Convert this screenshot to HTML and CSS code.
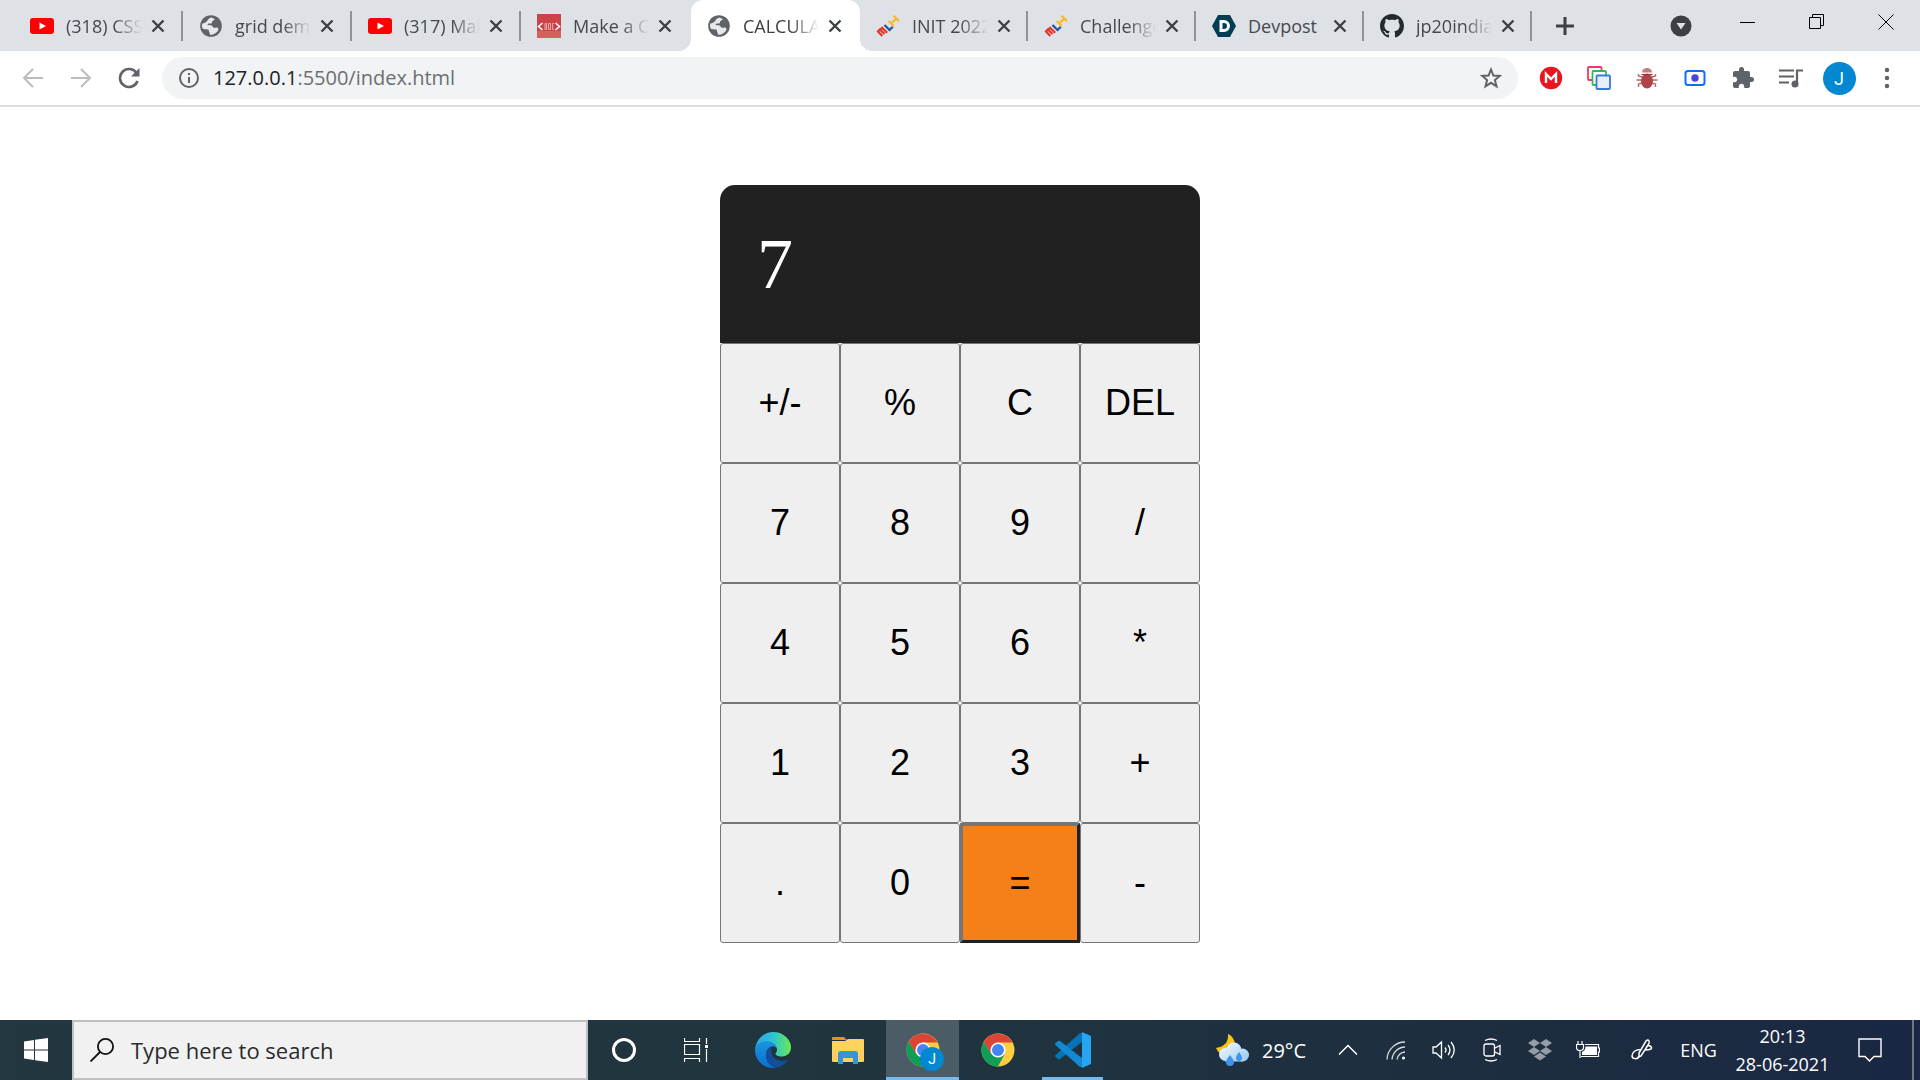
FILE: index.html
```
<!DOCTYPE html>
<html lang="en">
<head>
    <meta charset="UTF-8">
    <meta name="viewport" content="width=device-width, initial-scale=1.0">
    <title>CALCULATOR</title>
    <link rel="stylesheet" href="styles.css">
</head>
<body>
    <!-- shared icons -->
    <svg class="defs" width="0" height="0">
        <symbol id="x" viewBox="0 0 14 14"><path d="M1.5 1.5 12.5 12.5M12.5 1.5 1.5 12.5" stroke="#3c4043" stroke-width="2.4"/></symbol>
        <symbol id="youtube" viewBox="0 0 24 24"><rect y="4" width="24" height="16" rx="3" fill="#f00"/><path d="M9.5 8.500 16 12l-6.500 3.500z" fill="#fff"/></symbol>
        <symbol id="globe" viewBox="0 0 24 24"><circle cx="12" cy="12" r="10.800" fill="#5f6368"/><path d="M12.500 3.500C8 5 9 7 6.500 8.500L3.200 9.800c-.5 2-.2 3.500.8 5.200l5 .5c1.500.5.5 2 1.500 3l.5 2.300c4 .2 7-2 8.500-5l-.5-1.800c-1.500-1.500-3 .5-4.500-.5-1.500-1.200-1-2.500-3.500-2.300L8.500 11c0-2 2-1.500 3.500-1.500 1.500-.2.500-1.500 1.500-2.500 1-.8 2.500-.5 2-2z" fill="#e6e8eb"/></symbol>
        <symbol id="mlh" viewBox="0 0 24 24"><g fill="none" stroke-width="2.200"><path d="M1.300 16.800l5 5.200M1.900 17.400l2-1.900 4.700 4.500M4.200 15.800l2-2 4.900 4.900" stroke="#e73427"/><path d="M8.500 11l5 5 3.300-3.200" stroke="#1d539f"/><path d="M12.500 7l5.200 5M17.500 1.800l5.500 5.400M15 9.600l5.300-5.200" stroke="#f8b92a"/></g></symbol>
        <symbol id="chrome" viewBox="0 0 34 34"><circle cx="17" cy="17" r="16.500" fill="#ffcd40"/><path d="M2.700 8.700A16.500 16.500 0 0 1 31.500 9.500H17l-7 12z" fill="#db4437"/><path d="M2.700 8.700A16.500 16.500 0 0 0 17 33.500l6.500-12L17 17l-7 4z" fill="#0f9d58"/><circle cx="17" cy="17" r="7.600" fill="#fff"/><circle cx="17" cy="17" r="6" fill="#4285f4"/></symbol>
    </svg>

    <!-- tab strip -->
    <div class="tab-strip">
        <div class="tab"><svg class="favicon"><use href="#youtube"/></svg><span class="title">(318) CSS Grid</span><button class="close" aria-label="Close tab"><svg width="14" height="14"><use href="#x"/></svg></button></div>
        <div class="tab"><svg class="favicon"><use href="#globe"/></svg><span class="title">grid demo</span><button class="close" aria-label="Close tab"><svg width="14" height="14"><use href="#x"/></svg></button></div>
        <div class="tab"><svg class="favicon"><use href="#youtube"/></svg><span class="title">(317) Make</span><button class="close" aria-label="Close tab"><svg width="14" height="14"><use href="#x"/></svg></button></div>
        <div class="tab last-before"><svg class="favicon" viewBox="0 0 24 24"><rect width="24" height="24" fill="#cb444a"/><rect y="17" width="24" height="7" fill="#d5605c"/><path d="M5.500 9 1.500 12.500l4 3.500M18.500 9l4 3.500-4 3.500" fill="none" stroke="#fff" stroke-width="1.600"/><path d="M8 9.500h1.500v6H8zM11.500 9.500h2v6h-2zM17 9.500h-1.500v6H17" fill="none" stroke="#eba5a6"/></svg><span class="title">Make a Calculator</span><button class="close" aria-label="Close tab"><svg width="14" height="14"><use href="#x"/></svg></button></div>
        <div class="tab active"><svg class="favicon"><use href="#globe"/></svg><span class="title">CALCULATOR</span><button class="close" aria-label="Close tab"><svg width="14" height="14"><use href="#x"/></svg></button></div>
        <div class="tab"><svg class="favicon"><use href="#mlh"/></svg><span class="title">INIT 2022</span><button class="close" aria-label="Close tab"><svg width="14" height="14"><use href="#x"/></svg></button></div>
        <div class="tab"><svg class="favicon"><use href="#mlh"/></svg><span class="title">Challenges</span><button class="close" aria-label="Close tab"><svg width="14" height="14"><use href="#x"/></svg></button></div>
        <div class="tab"><svg class="favicon" viewBox="0 0 24 24"><path d="M6 1h12l6 11-6 11H6L0 12z" fill="#003e54"/><path d="M9 7.500h3a4.500 4.500 0 0 1 0 9H9z" fill="none" stroke="#fff" stroke-width="3"/></svg><span class="title short">Devpost</span><button class="close" aria-label="Close tab"><svg width="14" height="14"><use href="#x"/></svg></button></div>
        <div class="tab"><svg class="favicon" viewBox="0 0 16 16"><path fill="#24292e" d="M8 0C3.580 0 0 3.580 0 8c0 3.540 2.290 6.530 5.470 7.590.4.070.55-.17.55-.38 0-.19-.01-.82-.01-1.490-2.010.37-2.530-.49-2.690-.94-.09-.23-.48-.94-.82-1.130-.28-.15-.68-.52-.01-.53.63-.01 1.080.58 1.230.82.72 1.210 1.870.87 2.330.66.070-.52.28-.87.51-1.070-1.780-.2-3.640-.89-3.640-3.950 0-.87.31-1.590.82-2.150-.08-.2-.36-1.020.08-2.120 0 0 .67-.21 2.200.82.64-.18 1.320-.27 2-.27s1.360.09 2 .27c1.530-1.040 2.200-.82 2.200-.82.44 1.100.16 1.920.08 2.120.51.56.82 1.270.82 2.150 0 3.070-1.870 3.750-3.650 3.950.29.25.54.73.54 1.480 0 1.070-.01 1.930-.01 2.200 0 .21.15.46.55.38A8.010 8.010 0 0 0 16 8c0-4.420-3.580-8-8-8z"/></svg><span class="title">jp20india (Jp)</span><button class="close" aria-label="Close tab"><svg width="14" height="14"><use href="#x"/></svg></button></div>
        <button class="new-tab" aria-label="New tab"><svg width="18" height="18"><path d="M9 0v18M0 9h18" stroke="#3c4043" stroke-width="3"/></svg></button>
        <button class="tab-search" aria-label="Search tabs"><svg width="22" height="22"><circle cx="11" cy="11" r="10.500" fill="#3c4043"/><path d="M6.500 8h9L11 14.500z" fill="#dee1e6"/></svg></button>
        <button class="window-button" aria-label="Minimize"><svg width="16" height="16"><path d="M0 8.500h15" stroke="#000"/></svg></button>
        <button class="window-button" aria-label="Restore"><svg width="16" height="16" fill="none" stroke="#000"><path d="M.5 3.500h11v11H.500zM3.500 3V.500h11v11H12"/></svg></button>
        <button class="window-button" aria-label="Close"><svg width="16" height="16"><path d="M.5.500l15 15M15.500.500l-15 15" stroke="#000"/></svg></button>
    </div>

    <!-- toolbar -->
    <div class="toolbar">
        <button class="tool" aria-label="Back"><svg width="22" height="22" fill="none" stroke="#babcbe" stroke-width="2"><path d="M21 11H2M11 2l-9 9 9 9"/></svg></button>
        <button class="tool" aria-label="Forward"><svg width="22" height="22" fill="none" stroke="#babcbe" stroke-width="2"><path d="M1 11h19M11 2l9 9-9 9"/></svg></button>
        <button class="tool" aria-label="Reload"><svg width="22" height="22"><path d="M18.500 6A9 9 0 1 0 19.500 14" fill="none" stroke="#5f6368" stroke-width="2.600"/><path d="M21.500 1v8.500H13z" fill="#5f6368"/></svg></button>
        <div class="omnibox">
            <svg width="22" height="22"><circle cx="11" cy="11" r="9" fill="none" stroke="#5f6368" stroke-width="2"/><path d="M11 6v2M11 10v6" stroke="#5f6368" stroke-width="2"/></svg>
            <span class="url"><b>127.0.0.1</b>:5500/index.html</span>
            <button class="star" aria-label="Bookmark this tab"><svg width="22" height="22"><path d="M11 2.500l2.400 6 6.400.4-4.900 4.100 1.600 6.300-5.500-3.500-5.500 3.500 1.600-6.300-4.900-4.100 6.400-.4z" fill="none" stroke="#5f6368" stroke-width="2"/></svg></button>
        </div>
        <button class="tool" aria-label="Mega"><svg width="24" height="24"><circle cx="12" cy="12" r="11.200" fill="#e9141d"/><path d="M7 17V8l5 5 5-5v9" fill="none" stroke="#fff" stroke-width="2.400"/></svg></button>
        <button class="tool" aria-label="Tab copy"><svg width="24" height="24"><rect x="1" y="1" width="13.500" height="13" rx="1" fill="#fff" stroke="#ee3a60" stroke-width="1.800"/><rect x="5.500" y="5" width="13.500" height="14" rx="1" fill="#fff" stroke="#2bbd55" stroke-width="1.800"/><rect x="9.500" y="9.500" width="13.500" height="13.500" rx="1" fill="#e7f1fd" stroke="#3b78d8" stroke-width="1.800"/></svg></button>
        <button class="tool" aria-label="Bug extension"><svg width="22" height="22"><path d="M6 10 2.500 9V7M6 13H.500M6.500 16l-4 1v3M16 10l3.500-1V7M16 13h5.500M15.500 16l4 1v3" fill="none" stroke="#b56a6c" stroke-width="1.400"/><path d="M6 5.500a5 4.500 0 0 1 10 0z" fill="#c97b7b"/><ellipse cx="11" cy="14" rx="6" ry="7.500" fill="#b04347"/><path d="M5.500 7.500h11" stroke="#96383b"/></svg></button>
        <button class="tool" aria-label="Capture"><svg width="22" height="22"><rect x="1.500" y="4" width="19" height="14" rx="2.500" fill="#fff" stroke="#0b6efd" stroke-width="2"/><circle cx="11" cy="11" r="3.700" fill="#4a47d5"/></svg></button>
        <button class="tool" aria-label="Extensions"><svg width="24" height="24" viewBox="0 0 24 24"><path fill="#5f6368" d="M20.500 11H19V7c0-1.100-.9-2-2-2h-4V3.500a2.500 2.500 0 0 0-5 0V5H4c-1.100 0-2 .9-2 2v3.800h1.500c1.500 0 2.700 1.200 2.700 2.700S5 16.200 3.500 16.200H2V20c0 1.100.9 2 2 2h3.800v-1.500c0-1.500 1.200-2.700 2.700-2.700s2.700 1.200 2.700 2.700V22H17c1.100 0 2-.9 2-2v-4h1.500a2.500 2.500 0 0 0 0-5z"/></svg></button>
        <button class="tool" aria-label="Media control"><svg width="24" height="22"><path d="M0 3.500h15M0 9.500h15M0 15.500h10M18 17V3.500h6" fill="none" stroke="#5f6368" stroke-width="2.200"/><circle cx="16" cy="17" r="3.500" fill="#5f6368"/></svg></button>
        <button class="tool" aria-label="Profile"><span class="avatar">J</span></button>
        <button class="tool" aria-label="Menu"><svg width="6" height="22" fill="#5f6368"><circle cx="3" cy="3" r="2.200"/><circle cx="3" cy="11" r="2.200"/><circle cx="3" cy="19" r="2.200"/></svg></button>
    </div>

    <!-- calculator -->
    <main>
        <div class="calculator">
            <input type="text" id="display" class="display" aria-label="Display" value="7" readonly>
            <div class="keys">
                <button>+/-</button>
                <button>%</button>
                <button>C</button>
                <button>DEL</button>
                <button>7</button>
                <button>8</button>
                <button>9</button>
                <button>/</button>
                <button>4</button>
                <button>5</button>
                <button>6</button>
                <button>*</button>
                <button>1</button>
                <button>2</button>
                <button>3</button>
                <button>+</button>
                <button>.</button>
                <button>0</button>
                <button class="equal">=</button>
                <button>-</button>
            </div>
        </div>
    </main>

    <!-- taskbar -->
    <footer class="taskbar">
        <button class="system" aria-label="Start"><svg width="24" height="24" fill="#fff"><path d="M0 3.500 10 2v9.500H0zM11 1.800 24 0v11.500H11zM0 12.500h10V22L0 20.500zM11 12.500h13V24l-13-1.800z"/></svg></button>
        <label class="search">
            <svg width="24" height="24" fill="none" stroke="#111" stroke-width="1.800"><circle cx="15.500" cy="8.500" r="7.600"/><path d="M10 14 .5 23.500"/></svg>
            <input type="text" aria-label="Search" placeholder="Type here to search">
        </label>
        <button class="system" aria-label="Cortana"><svg width="26" height="26"><circle cx="13" cy="13" r="10.500" fill="none" stroke="#fff" stroke-width="3"/></svg></button>
        <button class="system" aria-label="Task view"><svg width="24" height="24" fill="none" stroke="#fff" stroke-width="1.200"><path d="M.5 0v3.500h15V0M.5 6.500h15v10H.500zM.5 24v-3.500h15V24M22.500 0v6M22.500 11v13"/><path d="M21 7h3v3h-3z" fill="#fff" stroke="none"/></svg></button>
        <div class="apps">
            <button class="app" aria-label="Edge"><svg width="36" height="36" viewBox="0 0 36 36">
                <defs>
                    <linearGradient id="edge-top" x1="0" x2="1"><stop offset="0" stop-color="#2ca7ea"/><stop offset=".5" stop-color="#2dc3d4"/><stop offset="1" stop-color="#6bea4d"/></linearGradient>
                    <linearGradient id="edge-side" x2="0" y2="1"><stop offset="0" stop-color="#1c96dc"/><stop offset="1" stop-color="#0a6ed4"/></linearGradient>
                </defs>
                <path d="M0 18C1 7 9 0 18 0c11 0 18 8 18 15 0 6-4 9.500-9 9.500-4 0-6.500-1.500-6.500-2.500s1.500-1.500 1.500-4.500c0-4-5-7.500-10.500-7.500C6 10 1 14 0 18z" fill="url(#edge-top)"/>
                <path d="M0 18c.5-5 5-9 11-9 6.500 0 11 4 11 8-1-2-3-3-5-2.500C12.500 15.500 11 20 11 23c0 6 4 11 10 13h-3C8 36 0 28 0 18z" fill="url(#edge-side)"/>
                <path d="M17 14.500C12.500 15.500 10.500 20 11 24c.5 6 5 11.500 10 11.700 5-.7 9.500-4 12.500-8.500-3 1.600-7 2-10 1-5.500-1.700-9-6.200-6.500-13.700z" fill="#124e9c"/>
            </svg></button>
            <button class="app" aria-label="File Explorer"><svg width="32" height="28"><path d="M0 2q0-1 1-1h11l3 3H0z" fill="#de9a05"/><path d="M0 5h13l3-2h15q1 0 1 1v21q0 1-1 1H1q-1 0-1-1z" fill="#ffd25f"/><path d="M6 28V18q0-3 3-3h14q3 0 3 3v10h-5v-6H11v6z" fill="#3693dc"/></svg></button>
            <button class="app current" aria-label="Chrome, profile J"><svg width="34" height="34"><use href="#chrome"/></svg><span class="badge">J</span></button>
            <button class="app" aria-label="Chrome"><svg width="34" height="34"><use href="#chrome"/></svg></button>
            <button class="app running" aria-label="Visual Studio Code"><svg width="36" height="36"><path d="M27 10 5 27q-1 .5-2 0l-2.500-2q-1-1 0-2L25 1l2 0z" fill="#0573b8"/><path d="M27 26 5 9q-1-.5-2 0L.5 11q-1 1 0 2L25 35l2 0z" fill="#1289d3"/><path d="M27 0l9 4v28l-9 4z" fill="#26a5f0"/></svg></button>
        </div>
        <div class="tray">
            <button class="weather"><svg width="34" height="32">
                <defs><linearGradient id="cloud" gradientUnits="userSpaceOnUse" x1="8" y1="8" x2="24" y2="30"><stop offset="0" stop-color="#f2f9ff"/><stop offset="1" stop-color="#9fcdf5"/></linearGradient></defs>
                <path d="M12 0Q13 12 0 14q3 7 10 7 10-2 9-12-2-7-7-9z" fill="#fcc419"/>
                <g fill="url(#cloud)"><circle cx="9.500" cy="20.500" r="6.500"/><circle cx="18" cy="16" r="7.500"/><circle cx="26.500" cy="21" r="6.500"/><path d="M9 18h18v9.500H9z"/></g>
                <path d="M14 21q4 5 4 7a4 4 0 0 1-8 0q0-2 4-7zM23 18q3 4 3 6a3 3 0 0 1-6 0q0-2 3-6z" fill="#3d94ea"/>
            </svg>29°C</button>
            <button class="tray-icon" aria-label="Show hidden icons"><svg width="20" height="12" fill="none" stroke="#fff" stroke-width="1.500"><path d="M1 10.500l9-9 9 9"/></svg></button>
            <button class="tray-icon" aria-label="Wi-Fi"><svg width="20" height="20" fill="none" stroke="#d5dade" stroke-width="1.300"><path d="M1 19.500A18 18 0 0 1 19 2M6 19.500A13.500 13.500 0 0 1 19 7M11 19.500A8.500 8.500 0 0 1 19 12"/><circle cx="17.500" cy="18" r="1.500" fill="#fff" stroke="none"/></svg></button>
            <button class="tray-icon" aria-label="Volume"><svg width="24" height="20" fill="none" stroke="#fff" stroke-width="1.300"><path d="M1 7v6h3l5.500 5V2L4 7zM13 7.500q2 2.500 0 5M16 5q4 5 0 10M19 2q6.500 8 0 16"/></svg></button>
            <button class="tray-icon" aria-label="Meet now"><svg width="18" height="24" fill="none" stroke="#fff" stroke-width="1.300"><rect x="1" y="6" width="10.500" height="12" rx="2"/><path d="M12 10l5-2.500v9L12 14M2 2.500q6-3 12 0M2 21.500q6 3 12 0"/></svg></button>
            <button class="tray-icon" aria-label="Dropbox"><svg width="24" height="22" fill="#959ca5"><path d="M6 0l6 4-6 4-6-4zM18 0l6 4-6 4-6-4zM6 8l6 4-6 4-6-4zM18 8l6 4-6 4-6-4zM12 13.500l6 4-6 4-6-4z"/></svg></button>
            <button class="tray-icon" aria-label="Battery"><svg width="24" height="18" fill="none" stroke="#fff" stroke-width="1.200"><path d="M9 3.500h13.500v3.500H23.500v4H22.500v4.500H5M2 0v3.500M6 0v3.500M.5 3.500h7v3q0 3-3.500 3T.5 6.500zM4 10v7"/><path d="M9.500 5.500h11.500V14H6v-3Q9.500 9.500 9.500 5.500z" fill="#fff" stroke="none"/></svg></button>
            <button class="tray-icon wide" aria-label="Ink workspace"><svg width="22" height="22" fill="none" stroke="#fff" stroke-width="1.500"><path d="M8 18V14L15 2q2-2 3 0t-1 4L10 17zM10 11C4 10 1 14 1 17s6 4 7 0M15 9l2-3q5 2 3 4-2 1-6 1"/></svg></button>
            <button class="language">ENG</button>
            <button class="clock">20:13<br>28-06-2021</button>
            <button class="tray-icon wide" aria-label="Notifications"><svg width="24" height="24" fill="none" stroke="#fff" stroke-width="1.400"><path d="M1 1h22v17.500h-7L11.500 23 7 18.500H1z"/></svg></button>
            <button class="show-desktop" aria-label="Show desktop"></button>
        </div>
    </footer>
</body>
</html>
```
FILE: styles.css
```
* { box-sizing: border-box; }
body { margin: 0; min-height: 100vh; display: flex; flex-direction: column; background-color: #fff; font-family: "Open Sans", "Noto Sans", sans-serif; }
button { margin: 0; padding: 0; border: none; background: none; color: inherit; font-family: inherit; }
svg { display: block; flex: none; }
.defs { position: absolute; }

/* tab strip */
.tab-strip { display: flex; align-items: center; height: 51px; padding-left: 14px; background-color: #dee1e6; }
.tab { display: flex; align-items: center; width: 169px; height: 30px; padding: 0 16px; border-right: 2px solid #8f9296; font-size: 18px; color: #45494d; }
.tab.last-before { width: 170px; border-right-color: transparent; }
.tab.active { position: relative; align-self: stretch; height: auto; border: none; border-radius: 12px 12px 0 0; background-color: #fff; color: #3c4043; }
.tab.active::before, .tab.active::after { content: ""; position: absolute; bottom: 0; width: 12px; height: 12px; }
.tab.active::before { right: 100%; background: radial-gradient(circle at 0 0, transparent 12px, #fff 12px); }
.tab.active::after { left: 100%; background: radial-gradient(circle at 100% 0, transparent 12px, #fff 12px); }
.tab.active ~ .tab { width: 168px; }
.favicon { width: 24px; height: 24px; margin-right: 12px; }
.title { flex: none; width: 76px; overflow: hidden; white-space: nowrap; line-height: 24px; -webkit-mask-image: linear-gradient(to right, #000 48px, transparent 76px); mask-image: linear-gradient(to right, #000 48px, transparent 76px); }
.title.short { -webkit-mask-image: none; mask-image: none; }
.close { margin-left: 9px; }
.new-tab { margin-left: 24px; }
.tab-search { display: flex; justify-content: center; width: 64px; margin-left: auto; }
.window-button { display: flex; justify-content: center; width: 69px; padding-bottom: 8px; }

/* toolbar */
.toolbar { display: flex; align-items: center; height: 56px; padding: 0 9px; border-bottom: 2px solid #dadce0; }
.tool { display: flex; align-items: center; justify-content: center; width: 48px; height: 42px; }
.omnibox { flex: 1; display: flex; align-items: center; height: 42px; margin: 0 9px; padding: 0 16px; border-radius: 21px; background-color: #f1f3f4; }
.url { flex: 1; margin-left: 13px; font-size: 20px; line-height: 28px; color: #6b6f73; }
.url b { font-weight: normal; color: #202124; }
.avatar { width: 33px; height: 33px; border-radius: 50%; background-color: #0288d1; color: #fff; font-family: Roboto, sans-serif; font-size: 18px; line-height: 33px; text-align: center; }

/* calculator */
main { flex: 1; padding: 78px 0 60px; }
.calculator { width: 480px; margin: 0 auto; }
.display { display: block; width: 100%; height: 158px; padding: 0 37px; border: none; border-radius: 15px 15px 0 0; outline: none; background-color: #212121; color: #fff; font-family: "Liberation Serif", serif; font-size: 72px; }
.keys { display: grid; grid-template-columns: repeat(4, 1fr); }
.keys button { height: 120px; border: 1px solid #767676; border-radius: 3px; background-color: #efefef; color: #000; font-family: "Liberation Sans", sans-serif; font-size: 36px; }
.keys .equal { border: 3px solid; border-color: #767676 #212121 #212121 #767676; border-radius: 0; background-color: #f58018; }

/* taskbar */
.taskbar { display: flex; height: 60px; background: linear-gradient(to right, #22373f, #20343f 50%, #1d2d40 80%, #1a2743); color: #fff; }
.system { display: flex; align-items: center; justify-content: center; width: 72px; }
.search { display: flex; align-items: center; width: 516px; padding: 0 16px; border: 2px solid #c0c0c0; background-color: #f1f1f1; }
.search input { flex: 1; margin-left: 17px; padding: 0; border: none; outline: none; background: none; font-family: inherit; font-size: 22px; }
.search input::placeholder { color: #2b2b2b; }
.apps { display: flex; gap: 2px; margin-left: 4px; }
.app { position: relative; display: flex; align-items: center; justify-content: center; width: 73px; }
.app.current { background-color: #4c5c66; box-shadow: inset 0 -3px #76b9ed; }
.app.running::after { content: ""; position: absolute; left: 6px; right: 6px; bottom: 0; height: 3px; background-color: #76b9ed; }
.badge { position: absolute; left: 34px; top: 27px; width: 24px; height: 24px; border-radius: 50%; background-color: #0288d1; font-family: Roboto, sans-serif; font-size: 14px; line-height: 24px; text-align: center; }
.tray { display: flex; margin-left: auto; }
.weather { display: flex; align-items: center; gap: 12px; width: 108px; font-size: 20px; }
.tray-icon { display: flex; align-items: center; justify-content: center; width: 48px; }
.tray-icon.wide { width: 60px; }
.language { width: 53px; font-size: 18px; }
.clock { width: 115px; font-size: 18px; line-height: 28px; }
.show-desktop { width: 8px; margin-left: 12px; border-left: 2px solid #6e7787; }
```
